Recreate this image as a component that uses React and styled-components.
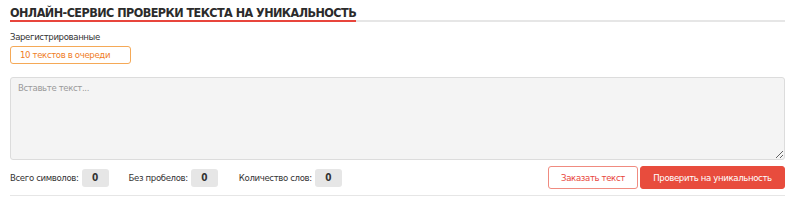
import React from "react";
import styled, { createGlobalStyle } from "styled-components";

const Global = createGlobalStyle`
  html, body { margin: 0; padding: 0; background: #fff; }
  body { font-family: "DejaVu Sans Condensed", "DejaVu Sans", sans-serif; color: #333; }
  * { box-sizing: border-box; }
`;

const Page = styled.div`
  width: 800px;
  padding: 0 15px 0 10px;
`;

const TitleBar = styled.div`
  display: flex;
  border-bottom: 2px solid #e6e6e6;
  padding-top: 5px;
`;

const Title = styled.h1`
  margin: 0 0 -2px 0;
  padding: 0;
  font-size: 12.5px;
  font-weight: bold;
  letter-spacing: -0.55px;
  line-height: 15px;
  color: #2b2b2b;
  border-bottom: 2px solid #e8453c;
`;

const Small = `
  font-size: 9.5px;
  letter-spacing: -0.35px;
`;

const Label = styled.div`
  ${Small}
  margin-top: 9px;
  line-height: 12px;
  color: #333;
`;

const Queue = styled.div`
  ${Small}
  margin-top: 3px;
  width: 121px;
  height: 18px;
  border: 1px solid #f5a957;
  border-radius: 3px;
  color: #ef7d1f;
  line-height: 16px;
  padding-left: 9px;
  white-space: nowrap;
`;

const TextArea = styled.textarea`
  ${Small}
  display: block;
  margin-top: 13px;
  width: 775px;
  height: 83px;
  background: #f4f4f4;
  border: 1px solid #dcdcdc;
  border-radius: 3px;
  padding: 4px 7px;
  font-family: inherit;
  color: #333;
  resize: vertical;
  &::placeholder { color: #9a9a9a; }
`;

const Footer = styled.div`
  display: flex;
  align-items: center;
  margin-top: 6px;
  height: 23px;
`;

const Stat = styled.div`
  ${Small}
  display: flex;
  align-items: center;
  margin-right: ${p => p.$gap}px;
  color: #333;
  white-space: nowrap;
`;

const Count = styled.span`
  display: inline-flex;
  align-items: center;
  justify-content: center;
  margin-left: 3px;
  width: 27px;
  height: 18px;
  background: #e6e6e6;
  border-radius: 3px;
  font-weight: bold;
  font-size: 10px;
  letter-spacing: 0;
`;

const Spacer = styled.div`
  flex: 1;
`;

const Button = styled.button`
  ${Small}
  height: 23px;
  border-radius: 3px;
  font-family: inherit;
  padding: 0;
  white-space: nowrap;
  width: ${p => p.$w}px;
  margin-left: ${p => p.$ml || 0}px;
  border: 1px solid ${p => (p.$primary ? "#e84c3d" : "#f08b80")};
  background: ${p => (p.$primary ? "#e84c3d" : "#fff")};
  color: ${p => (p.$primary ? "#fff" : "#e8453c")};
`;

const Rule = styled.div`
  margin-top: 6px;
  height: 1px;
  background: #e6e6e6;
`;

export default function App() {
  return (
    <Page>
      <Global />
      <TitleBar>
        <Title>ОНЛАЙН-СЕРВИС ПРОВЕРКИ ТЕКСТА НА УНИКАЛЬНОСТЬ</Title>
      </TitleBar>
      <Label>Зарегистрированные</Label>
      <Queue>10 текстов в очереди</Queue>
      <TextArea placeholder="Вставьте текст..." />
      <Footer>
        <Stat $gap={20}>Всего символов:<Count>0</Count></Stat>
        <Stat $gap={21}>Без пробелов:<Count>0</Count></Stat>
        <Stat $gap={0}>Количество слов:<Count>0</Count></Stat>
        <Spacer />
        <Button $w={90}>Заказать текст</Button>
        <Button $primary $w={145} $ml={2}>Проверить на уникальность</Button>
      </Footer>
      <Rule />
    </Page>
  );
}
